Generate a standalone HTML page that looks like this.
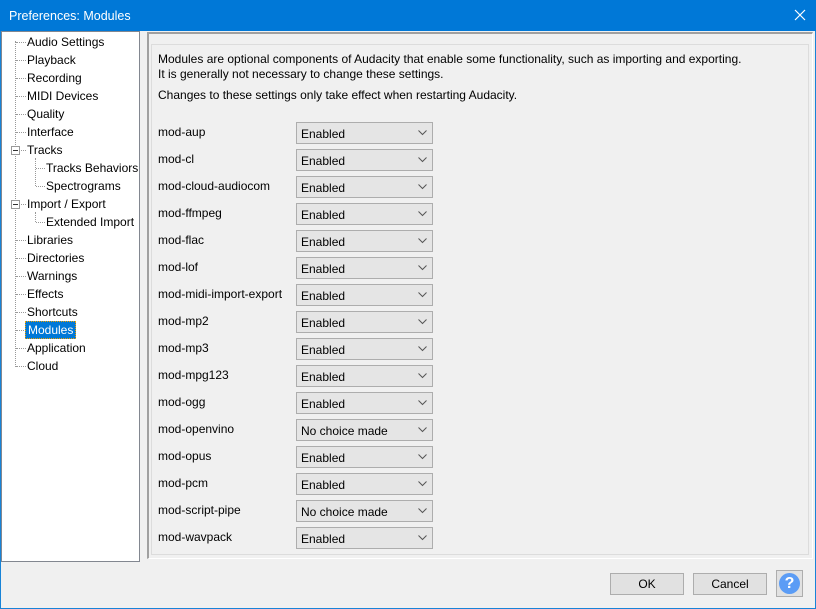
<!DOCTYPE html>
<html><head><style>
*{margin:0;padding:0;box-sizing:border-box}
body{width:816px;height:609px;background:#f0f0f0;font-family:"Liberation Sans",sans-serif;font-size:12px;color:#000;position:relative;overflow:hidden}
.abs{position:absolute}
#win{left:0;top:0;width:816px;height:609px;border:1px solid #1883d7}
#title{left:0;top:0;width:816px;height:31px;background:#0078d7;color:#fff;font-size:12.5px;padding:9px 0 0 9px}
#tree{left:1px;top:31px;width:139px;height:531px;background:#fff;border:1px solid #828790}
.ti{position:absolute;white-space:nowrap;line-height:14px}
.dh{position:absolute;height:1px;border-top:1px dotted #999}
.dv{position:absolute;width:1px;border-left:1px dotted #999}
.pm{position:absolute;width:9px;height:9px;border:1px solid #999;background:#fff}
.pm:after{content:"";position:absolute;left:1px;top:3px;width:5px;height:1px;background:#333}
#pan{left:147px;top:32px;width:666px;height:527px;border-top:2px solid #a0a0a0;border-left:2px solid #a0a0a0;border-right:1px solid #fff;border-bottom:1px solid #fff}
#inner{left:151px;top:44px;width:658px;height:511px;border:1px solid #dcdcdc}
.lbl{position:absolute;left:158px}
.dd{position:absolute;left:296px;width:137px;height:22px;background:#e5e5e5;border:1px solid #adadad;padding:4px 0 0 4px}
.dd svg{position:absolute;right:5px;top:7px}
.btn{position:absolute;top:573px;width:74px;height:22px;background:#e1e1e1;border:1px solid #adadad;text-align:center;line-height:20px}
</style></head><body>
<div id="win" class="abs"></div>
<div id="title" class="abs">Preferences: Modules</div>
<svg class="abs" style="left:794px;top:9px" width="12" height="12"><path d="M1 1L11 11M11 1L1 11" stroke="#fff" stroke-width="1.2"/></svg>
<div id="tree" class="abs">
<div class="dv" style="left:13px;top:9px;height:326px"></div>
<div class="dv" style="left:33px;top:126px;height:28px"></div>
<div class="dv" style="left:33px;top:180px;height:10px"></div>
<div class="dh" style="left:14px;top:10px;width:10px"></div><div class="ti" style="left:25px;top:3px">Audio Settings</div>
<div class="dh" style="left:14px;top:28px;width:10px"></div><div class="ti" style="left:25px;top:21px">Playback</div>
<div class="dh" style="left:14px;top:46px;width:10px"></div><div class="ti" style="left:25px;top:39px">Recording</div>
<div class="dh" style="left:14px;top:64px;width:10px"></div><div class="ti" style="left:25px;top:57px">MIDI Devices</div>
<div class="dh" style="left:14px;top:82px;width:10px"></div><div class="ti" style="left:25px;top:75px">Quality</div>
<div class="dh" style="left:14px;top:100px;width:10px"></div><div class="ti" style="left:25px;top:93px">Interface</div>
<div class="dh" style="left:14px;top:118px;width:10px"></div><div class="pm" style="left:9px;top:114px"></div><div class="ti" style="left:25px;top:111px">Tracks</div>
<div class="dh" style="left:34px;top:136px;width:9px"></div><div class="ti" style="left:44px;top:129px">Tracks Behaviors</div>
<div class="dh" style="left:34px;top:154px;width:9px"></div><div class="ti" style="left:44px;top:147px">Spectrograms</div>
<div class="dh" style="left:14px;top:172px;width:10px"></div><div class="pm" style="left:9px;top:168px"></div><div class="ti" style="left:25px;top:165px">Import / Export</div>
<div class="dh" style="left:34px;top:190px;width:9px"></div><div class="ti" style="left:44px;top:183px">Extended Import</div>
<div class="dh" style="left:14px;top:208px;width:10px"></div><div class="ti" style="left:25px;top:201px">Libraries</div>
<div class="dh" style="left:14px;top:226px;width:10px"></div><div class="ti" style="left:25px;top:219px">Directories</div>
<div class="dh" style="left:14px;top:244px;width:10px"></div><div class="ti" style="left:25px;top:237px">Warnings</div>
<div class="dh" style="left:14px;top:262px;width:10px"></div><div class="ti" style="left:25px;top:255px">Effects</div>
<div class="dh" style="left:14px;top:280px;width:10px"></div><div class="ti" style="left:25px;top:273px">Shortcuts</div>
<div class="dh" style="left:14px;top:298px;width:10px"></div><div class="ti" style="left:23px;top:289px;background:#0078d7;color:#fff;padding:1px 2px;border:1px dotted #f0a000">Modules</div>
<div class="dh" style="left:14px;top:316px;width:10px"></div><div class="ti" style="left:25px;top:309px">Application</div>
<div class="dh" style="left:14px;top:334px;width:10px"></div><div class="ti" style="left:25px;top:327px">Cloud</div>
</div>
<div id="pan" class="abs"></div>
<div id="inner" class="abs"></div>
<div class="abs" style="left:158px;top:52px;line-height:15px">Modules are optional components of Audacity that enable some functionality, such as importing and exporting.<br>It is generally not necessary to change these settings.</div>
<div class="abs" style="left:158px;top:88px">Changes to these settings only take effect when restarting Audacity.</div>
<div id="rows"></div>
<script>
var m=[["mod-aup","Enabled"],["mod-cl","Enabled"],["mod-cloud-audiocom","Enabled"],["mod-ffmpeg","Enabled"],["mod-flac","Enabled"],["mod-lof","Enabled"],["mod-midi-import-export","Enabled"],["mod-mp2","Enabled"],["mod-mp3","Enabled"],["mod-mpg123","Enabled"],["mod-ogg","Enabled"],["mod-openvino","No choice made"],["mod-opus","Enabled"],["mod-pcm","Enabled"],["mod-script-pipe","No choice made"],["mod-wavpack","Enabled"]];
var h="";m.forEach(function(r,i){var y=122+i*27;h+='<div class="lbl" style="top:'+(y+3)+'px">'+r[0]+'</div><div class="dd" style="top:'+y+'px">'+r[1]+'<svg width="9" height="6"><path d="M0.5 0.5L4.5 4.5L8.5 0.5" stroke="#555" fill="none"/></svg></div>';});
document.getElementById("rows").innerHTML=h;
</script>
<div class="btn" style="left:610px">OK</div>
<div class="btn" style="left:693px">Cancel</div>
<div class="abs" style="left:776px;top:570px;width:27px;height:27px;background:#e1e1e1;border:1px solid #adadad"></div>
<div class="abs" style="left:779px;top:573px;width:21px;height:21px;border-radius:50%;background:#5b9cf5;color:#fff;font-weight:bold;font-size:16px;text-align:center;line-height:21px">?</div>
</body></html>
